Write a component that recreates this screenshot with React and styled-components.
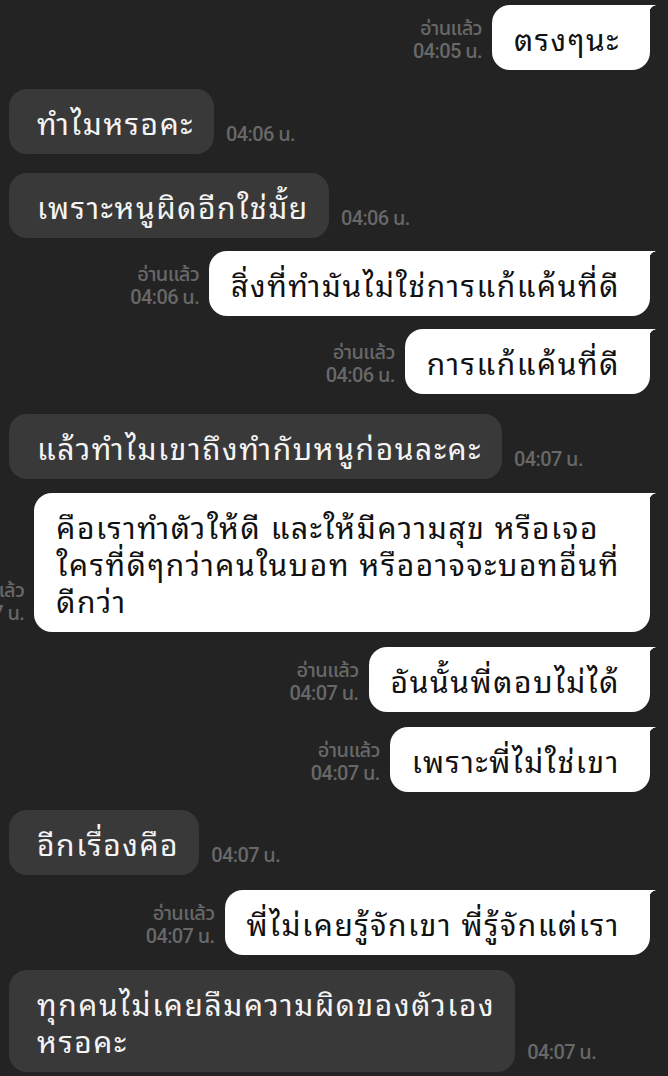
import React from "react";
import styled, { createGlobalStyle } from "styled-components";

const GlobalStyle = createGlobalStyle`
    html, body {
        margin: 0;
        padding: 0;
        background: #232323;
        overflow: hidden;
    }
`;

const Chat = styled.div`
    width: 668px;
    height: 1076px;
    overflow: hidden;
    background: #232323;
    display: flex;
    flex-direction: column;
    padding-top: 5px;
    box-sizing: border-box;
    font-family: "Noto Sans Thai Looped", "Loma", "Garuda", "Tlwg Typo", "Noto Sans Thai", "Noto Sans", sans-serif;
`;

const Row = styled.div`
    display: flex;
    align-items: flex-end;
    justify-content: ${(p) => (p.$mine ? "flex-end" : "flex-start")};
    gap: ${(p) => (p.$mine ? "10px" : "12px")};
    margin-top: ${(p) => p.$top || 0}px;
    padding: ${(p) => (p.$mine ? "0 18px 0 0" : "0 0 0 9px")};
`;

const Bubble = styled.div`
    position: relative;
    flex-shrink: 0;
    font-size: 30px;
    line-height: 37px;
    letter-spacing: 1.6px;
    padding: 14px ${(p) => (p.$mine ? "30px" : "20px")} 14px ${(p) => (p.$mine ? "22px" : "28px")};
    border-radius: ${(p) => (p.$mine ? "18px 0 18px 18px" : "18px")};
    background: ${(p) => (p.$mine ? "#ffffff" : "#393939")};
    color: ${(p) => (p.$mine ? "#111111" : "#f4f4f4")};
    white-space: nowrap;

    &::after {
        content: "";
        display: ${(p) => (p.$mine ? "block" : "none")};
        position: absolute;
        top: 0;
        right: -7px;
        width: 8px;
        height: 8px;
        background: radial-gradient(circle at 100% 100%, transparent 7.5px, #ffffff 8px);
    }
`;

const Meta = styled.div`
    flex-shrink: 0;
    font-family: "Roboto", "Noto Sans Thai", sans-serif;
    font-weight: 500;
    font-size: 20px;
    line-height: 23px;
    color: #686868;
    text-align: right;
    letter-spacing: -0.6px;
    margin-bottom: ${(p) => (p.$mine ? "7px" : "8px")};
`;

const messages = [
    { mine: true, top: 0, lines: ["ตรงๆนะ"], time: "04:05 น." },
    { mine: false, top: 19, lines: ["ทำไมหรอคะ"], time: "04:06 น." },
    { mine: false, top: 19, lines: ["เพราะหนูผิดอีกใช่มั้ย"], time: "04:06 น." },
    { mine: true, top: 13, lines: ["สิ่งที่ทำมันไม่ใช่การแก้แค้นที่ดี"], time: "04:06 น." },
    { mine: true, top: 13, lines: ["การแก้แค้นที่ดี"], time: "04:06 น." },
    { mine: false, top: 20, lines: ["แล้วทำไมเขาถึงทำกับหนูก่อนละคะ"], time: "04:07 น." },
    {
        mine: true,
        top: 14,
        lines: ["คือเราทำตัวให้ดี และให้มีความสุข หรือเจอ", "ใครที่ดีๆกว่าคนในบอท หรืออาจจะบอทอื่นที่", "ดีกว่า"],
        time: "04:07 น.",
    },
    { mine: true, top: 15, lines: ["อันนั้นพี่ตอบไม่ได้"], time: "04:07 น." },
    { mine: true, top: 15, lines: ["เพราะพี่ไม่ใช่เขา"], time: "04:07 น." },
    { mine: false, top: 18, lines: ["อีกเรื่องคือ"], time: "04:07 น." },
    { mine: true, top: 15, lines: ["พี่ไม่เคยรู้จักเขา พี่รู้จักแต่เรา"], time: "04:07 น." },
    { mine: false, top: 15, lines: ["ทุกคนไม่เคยลืมความผิดของตัวเอง", "หรอคะ"], time: "04:07 น." },
];

function Message({ msg }) {
    const text = msg.lines.map((l, i) => (
        <React.Fragment key={i}>
            {i > 0 && <br />}
            {l}
        </React.Fragment>
    ));

    if (msg.mine) {
        return (
            <Row $mine $top={msg.top}>
                <Meta $mine>
                    อ่านแล้ว
                    <br />
                    {msg.time}
                </Meta>
                <Bubble $mine>{text}</Bubble>
            </Row>
        );
    }

    return (
        <Row $top={msg.top}>
            <Bubble>{text}</Bubble>
            <Meta>{msg.time}</Meta>
        </Row>
    );
}

export default function App() {
    return (
        <>
            <GlobalStyle />
            <Chat>
                {messages.map((m, i) => (
                    <Message key={i} msg={m} />
                ))}
            </Chat>
        </>
    );
}
